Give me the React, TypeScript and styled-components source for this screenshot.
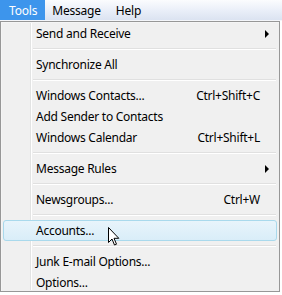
import React from "react";
import styled, { createGlobalStyle } from "styled-components";

const Global = createGlobalStyle`
  html, body { margin: 0; padding: 0; background: #ffffff; }
  body { font-family: "Noto Sans", "Open Sans", sans-serif; font-size: 12px; }
`;

const Window = styled.div`
  position: relative;
  width: 282px;
  height: 295px;
  overflow: hidden;
`;

const MenuBar = styled.div`
  display: flex;
  height: 20px;
  background: linear-gradient(#fbfcfe, #e9eef8 55%, #dbe3f1);
  border-bottom: 1px solid #f4f6fa;
`;

const BarItem = styled.div<{ $open?: boolean }>`
  display: flex;
  align-items: center;
  padding: 0 8px 0 ${(p) => (p.$open ? "9px" : "7px")};
  color: ${(p) => (p.$open ? "#ffffff" : "#000000")};
  background: ${(p) => (p.$open ? "#3d95ec" : "transparent")};
  letter-spacing: -0.2px;
`;

const Dropdown = styled.div`
  position: relative;
  width: 280px;
  height: 271px;
  border: 1px solid #979797;
  background: #f0f0f0;
  padding: 1px 0;
  box-sizing: border-box;
  box-shadow: inset 1px 1px 0 #f5f5f5;
`;

const Gutter = styled.div`
  position: absolute;
  top: 1px;
  bottom: 1px;
  left: 29px;
  width: 2px;
  background: linear-gradient(90deg, #e2e3e3 0 1px, #ffffff 1px 2px);
`;

const Item = styled.div<{ $hover?: boolean }>`
  position: relative;
  display: flex;
  align-items: center;
  height: 21px;
  margin: 0 2px;
  padding: 0 16px 0 32px;
  color: #000000;
  letter-spacing: -0.25px;
  border: 1px solid ${(p) => (p.$hover ? "#a9d9ec" : "transparent")};
  border-radius: 3px;
  box-sizing: border-box;
  background: ${(p) =>
    p.$hover ? "linear-gradient(#e8f4fb, #d9edf8)" : "transparent"};
`;

const Label = styled.span`
  flex: 1;
  white-space: nowrap;
`;

const Shortcut = styled.span`
  white-space: nowrap;
`;

const Arrow = styled.span`
  position: absolute;
  right: 7px;
  top: 6px;
  width: 0;
  height: 0;
  border-left: 4px solid #000000;
  border-top: 4px solid transparent;
  border-bottom: 4px solid transparent;
`;

const Separator = styled.div`
  height: 10px;
  display: flex;
  align-items: center;
  padding-left: 32px;
  padding-right: 3px;
  &::after {
    content: "";
    flex: 1;
    height: 2px;
    background: linear-gradient(#e0e0e0 0 1px, #ffffff 1px 2px);
  }
`;

const Cursor = styled.svg`
  position: absolute;
  left: 108px;
  top: 227px;
`;

type Entry =
  | { sep: true }
  | { label: string; key?: string; sub?: boolean; hover?: boolean };

const entries: Entry[] = [
  { label: "Send and Receive", sub: true },
  { sep: true },
  { label: "Synchronize All" },
  { sep: true },
  { label: "Windows Contacts...", key: "Ctrl+Shift+C" },
  { label: "Add Sender to Contacts" },
  { label: "Windows Calendar", key: "Ctrl+Shift+L" },
  { sep: true },
  { label: "Message Rules", sub: true },
  { sep: true },
  { label: "Newsgroups...", key: "Ctrl+W" },
  { sep: true },
  { label: "Accounts...", hover: true },
  { sep: true },
  { label: "Junk E-mail Options..." },
  { label: "Options..." },
];

export default function App() {
  return (
    <Window>
      <Global />
      <MenuBar>
        <BarItem $open>Tools</BarItem>
        <BarItem>Message</BarItem>
        <BarItem>Help</BarItem>
      </MenuBar>
      <Dropdown>
        <Gutter />
        {entries.map((e, i) =>
          "sep" in e ? (
            <Separator key={i} />
          ) : (
            <Item key={i} $hover={e.hover}>
              <Label>{e.label}</Label>
              {e.key && <Shortcut>{e.key}</Shortcut>}
              {e.sub && <Arrow />}
            </Item>
          )
        )}
      </Dropdown>
      <Cursor width="12" height="19" viewBox="0 0 12 19">
        <path
          d="M0.5 0.5 L0.5 15.5 L4 12 L6.5 18 L8.5 17.2 L6 11.3 L10.8 11.3 Z"
          fill="#ffffff"
          stroke="#000000"
          strokeWidth="1"
          strokeLinejoin="miter"
        />
      </Cursor>
    </Window>
  );
}
